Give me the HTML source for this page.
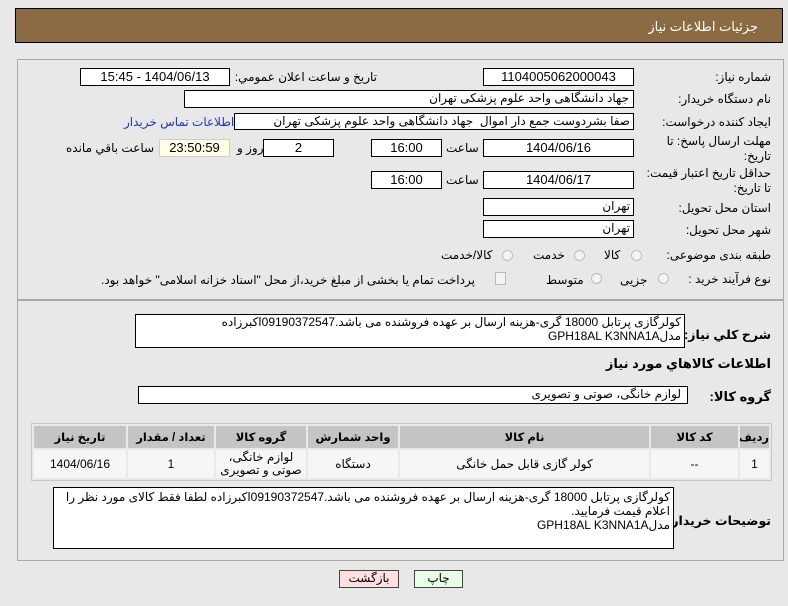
<!DOCTYPE html>
<html><head><meta charset="utf-8"><style>
body{margin:0;width:788px;height:606px;background:#e8e8e8;font-family:"Liberation Sans","DejaVu Sans",sans-serif;font-size:12px;color:#000;position:relative;overflow:hidden;direction:rtl}
.a{position:absolute;white-space:nowrap;font-size:12px}
.b{position:absolute;background:#fff;border:1px solid #000;box-sizing:border-box;text-align:center;line-height:15px;font-size:13px;overflow:hidden;white-space:nowrap}
.l{position:absolute;white-space:nowrap;text-align:right;font-size:12px}
.r{position:absolute;width:11px;height:11px;border-radius:50%;border:1px solid #bbb;background:#f4f4f4;box-sizing:border-box}
table{position:absolute;border-collapse:separate;border-spacing:2px;background:#e8e8e8;border:1px solid #c8c8c8;table-layout:fixed;box-sizing:border-box}
th{background:#c4c4c4;height:22px;font-size:11.5px;padding:0;overflow:hidden;white-space:nowrap}
td{background:#f6f6f6;text-align:center;height:28px;font-size:12px;line-height:13px;padding:0}
</style></head><body>
<div class="a" style="left:15px;top:8px;width:768px;height:35px;background:#8b6c42;border:1px solid #000;box-sizing:border-box"></div>
<div class="a" style="right:30px;top:19px;color:#fff;font-size:13px">جزئیات اطلاعات نیاز</div>
<div class="a" style="left:17px;top:59px;width:767px;height:241px;border:1px solid #a8a8a8;box-sizing:border-box"></div>
<div class="a" style="left:17px;top:299px;width:767px;height:262px;border:1px solid #a8a8a8;border-top:2px solid #a8a8a8;box-sizing:border-box"></div>

<div class="l" style="right:17px;top:70px">شماره نیاز:</div>
<div class="b" style="left:483px;top:68px;width:151px;height:18px">1104005062000043</div>
<div class="l" style="right:411px;top:70px">تاريخ و ساعت اعلان عمومي:</div>
<div class="b" style="left:80px;top:68px;width:150px;height:18px">1404/06/13 - 15:45</div>

<div class="l" style="right:17px;top:92px">نام دستگاه خریدار:</div>
<div class="b" style="left:184px;top:90px;width:450px;height:18px;text-align:right;padding-right:4px;font-size:12px">جهاد دانشگاهی واحد علوم پزشکی تهران</div>

<div class="l" style="right:17px;top:115px">ایجاد کننده درخواست:</div>
<div class="b" style="left:234px;top:113px;width:400px;height:17px;text-align:right;padding-right:3px;font-size:12px">صفا بشردوست جمع دار اموال &nbsp;جهاد دانشگاهی واحد علوم پزشکی تهران</div>
<div class="a" style="left:124px;top:115px;color:#2233cc">اطلاعات تماس خریدار</div>

<div class="l" style="right:17px;top:134px;line-height:15px">مهلت ارسال پاسخ: تا<br>تاریخ:</div>
<div class="b" style="left:483px;top:139px;width:151px;height:18px">1404/06/16</div>
<div class="a" style="left:446px;top:141px">ساعت</div>
<div class="b" style="left:371px;top:139px;width:71px;height:18px">16:00</div>
<div class="b" style="left:263px;top:139px;width:71px;height:18px">2</div>
<div class="a" style="left:237px;top:141px">روز و</div>
<div class="b" style="left:159px;top:139px;width:71px;height:18px;background:#ffffe6;border-color:#ccc">23:50:59</div>
<div class="a" style="left:66px;top:141px">ساعت باقي مانده</div>

<div class="l" style="right:17px;top:166px;line-height:15px">حداقل تاریخ اعتبار قیمت:<br>تا تاریخ:</div>
<div class="b" style="left:483px;top:171px;width:151px;height:18px">1404/06/17</div>
<div class="a" style="left:446px;top:173px">ساعت</div>
<div class="b" style="left:371px;top:171px;width:71px;height:18px">16:00</div>

<div class="l" style="right:17px;top:201px">استان محل تحویل:</div>
<div class="b" style="left:483px;top:198px;width:151px;height:18px;text-align:right;padding-right:3px;font-size:12px">تهران</div>
<div class="l" style="right:17px;top:223px">شهر محل تحویل:</div>
<div class="b" style="left:483px;top:220px;width:151px;height:18px;text-align:right;padding-right:3px;font-size:12px">تهران</div>

<div class="l" style="right:17px;top:248px">طبقه بندی موضوعی:</div>
<div class="r" style="left:631px;top:250px"></div><div class="a" style="left:604px;top:248px">کالا</div>
<div class="r" style="left:574px;top:250px"></div><div class="a" style="left:533px;top:248px">خدمت</div>
<div class="r" style="left:502px;top:250px"></div><div class="a" style="left:441px;top:248px">کالا/خدمت</div>

<div class="l" style="right:17px;top:272px">نوع فرآیند خرید :</div>
<div class="r" style="left:658px;top:273px"></div><div class="a" style="left:620px;top:273px">جزیی</div>
<div class="r" style="left:591px;top:273px"></div><div class="a" style="left:546px;top:273px">متوسط</div>
<div class="a" style="left:495px;top:272px;width:9px;height:11px;border:1px solid #bbb;background:#f4f4f4"></div>
<div class="a" style="left:101px;top:273px">پرداخت تمام یا بخشی از مبلغ خرید،از محل "اسناد خزانه اسلامی" خواهد بود.</div>

<div class="l" style="right:17px;top:327px;font-size:12.5px;font-weight:bold">شرح کلي نياز:</div>
<div class="b" style="left:135px;top:314px;width:550px;height:34px;text-align:right;padding-right:3px;line-height:14px;font-size:12px;white-space:normal">کولرگازی پرتابل 18000 گری-هزینه ارسال بر عهده فروشنده می باشد.09190372547اکبرزاده<br>مدلGPH18AL K3NNA1A</div>
<div class="l" style="right:17px;top:356px;font-size:13px;font-weight:bold">اطلاعات کالاهاي مورد نياز</div>
<div class="l" style="right:17px;top:389px;font-size:13px;font-weight:bold">گروه کالا:</div>
<div class="b" style="left:138px;top:386px;width:550px;height:18px;text-align:right;padding-right:6px;font-size:12px">لوازم خانگی، صوتی و تصویری</div>

<table style="left:31px;top:423px;width:741px">
<colgroup><col style="width:29px"><col style="width:87px"><col style="width:249px"><col style="width:90px"><col style="width:90px"><col style="width:86px"><col></colgroup>
<tr><th>ردیف</th><th>کد کالا</th><th>نام کالا</th><th>واحد شمارش</th><th>گروه کالا</th><th>تعداد / مقدار</th><th>تاریخ نیاز</th></tr>
<tr><td>1</td><td>--</td><td>کولر گازی قابل حمل خانگی</td><td>دستگاه</td><td>لوازم خانگی،<br>صوتی و تصویری</td><td>1</td><td>1404/06/16</td></tr>
</table>

<div class="l" style="right:17px;top:513px;font-size:12.5px;font-weight:bold">توضیحات خریدار:</div>
<div class="b" style="left:53px;top:487px;width:621px;height:62px;text-align:right;padding:2px 3px 0 0;line-height:14px;font-size:12px;white-space:normal">کولرگازی پرتابل 18000 گری-هزینه ارسال بر عهده فروشنده می باشد.09190372547اکبرزاده لطفا فقط کالای مورد نظر را اعلام قیمت فرمایید.<br>مدلGPH18AL K3NNA1A</div>

<div class="b" style="left:339px;top:570px;width:60px;height:18px;background:#ffe0e0;border-color:#444;font-size:12px">بازگشت</div>
<div class="b" style="left:414px;top:570px;width:49px;height:18px;background:#e6ffe6;border-color:#444;font-size:12px">چاپ</div>
</body></html>
